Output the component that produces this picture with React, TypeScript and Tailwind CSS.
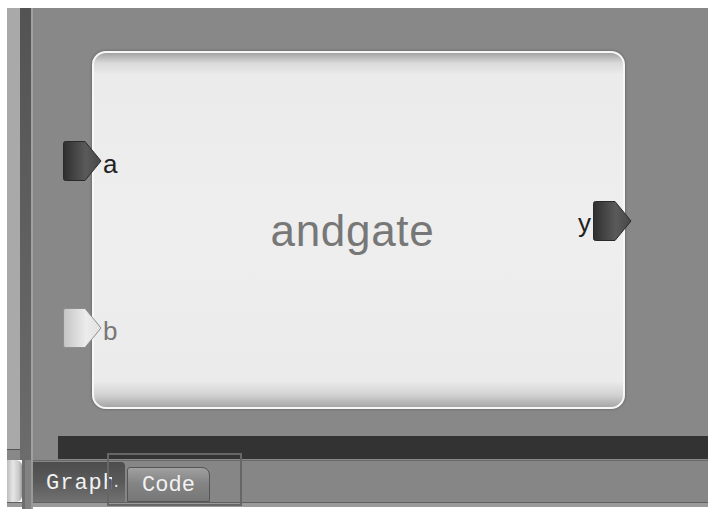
function PortShape({ dark }: { dark: boolean }) {
  const id = dark ? "portDark" : "portLight";
  return (
    <svg width="39" height="40" viewBox="0 0 39 40">
      <defs>
        <linearGradient id={id} x1="0" y1="0" x2="1" y2="0">
          {dark ? (
            <>
              <stop offset="0" stopColor="#2f2f2f" />
              <stop offset="0.6" stopColor="#5a5a5a" />
              <stop offset="1" stopColor="#474747" />
            </>
          ) : (
            <>
              <stop offset="0" stopColor="#c4c4c4" />
              <stop offset="0.6" stopColor="#ececec" />
              <stop offset="1" stopColor="#e2e2e2" />
            </>
          )}
        </linearGradient>
      </defs>
      <path
        d="M2.5 0.5 H22 L38 20 L22 39.5 H2.5 Q0.5 39.5 0.5 37.5 V2.5 Q0.5 0.5 2.5 0.5 Z"
        fill={`url(#${id})`}
        stroke={dark ? "#2a2a2a" : "#8e8e8e"}
        strokeWidth="1"
      />
    </svg>
  );
}

function AndGate() {
  return (
    <div className="relative w-[533px] h-[358px] rounded-[14px] border-2 border-[#f7f7f7] shadow-[0_0_3px_rgba(0,0,0,0.35)] bg-[linear-gradient(to_bottom,#a3a3a3_0px,#d9d9d9_10px,#ebebeb_22px,#eeeeee_50%,#ebebeb_calc(100%-26px),#d2d2d2_calc(100%-12px),#a6a6a6_100%)]">
      <div className="absolute inset-0 flex items-center justify-center pr-[12px] pt-[2px]">
        <span className="text-[44px] tracking-[0.7px] text-[#777]">andgate</span>
      </div>

      {/* input a */}
      <div className="absolute left-[-31px] top-[88px]">
        <PortShape dark />
      </div>
      <span className="absolute left-[9px] top-[98px] text-[26px] leading-none text-[#222]">a</span>

      {/* input b */}
      <div className="absolute left-[-31px] top-[255px]">
        <PortShape dark={false} />
      </div>
      <span className="absolute left-[9px] top-[265px] text-[26px] leading-none text-[#777]">b</span>

      {/* output y */}
      <div className="absolute left-[499px] top-[148px]">
        <PortShape dark />
      </div>
      <span className="absolute left-[484px] top-[157px] text-[26px] leading-none text-[#222]">y</span>
    </div>
  );
}

export default function App() {
  return (
    <div className="relative w-[712px] h-[516px] overflow-hidden bg-white pt-[8px] pl-[7px] pr-[4px] flex flex-col font-['Liberation_Sans',Arial,sans-serif]">
      {/* editor area */}
      <div className="flex h-[452px]">
        <div className="w-[13px] flex flex-col">
          <div className="flex-1 bg-[#a9a9a9]" />
          <div className="h-px bg-[#555]" />
          <div className="h-[10px] bg-[#888]" />
        </div>
        <div className="w-[11px] bg-[linear-gradient(to_bottom,#535353,#6c6c6c)]" />
        <div className="w-[2px] bg-[#a0a0a0]" />

        <div className="flex-1 flex flex-col bg-[#888]">
          <div className="flex-1 pl-[59px] pt-[43px]">
            <AndGate />
          </div>
          <div className="ml-[25px] h-[23px] mb-px bg-[#333]" />
        </div>
      </div>

      {/* tab bar */}
      <div className="flex h-[49px]">
        <div className="w-[15px] flex flex-col">
          <div className="h-[42px] rounded-r-[6px] bg-[linear-gradient(to_right,#bdbdbd,#e6e6e6_40%,#c8c8c8_80%,#9a9a9a)]" />
          <div className="h-px bg-[#606060]" />
          <div className="h-[4px] bg-[#9a9a9a]" />
        </div>
        <div className="w-[3px] bg-[#6d6d6d]" />
        <div className="w-[6px] bg-[#828282]" />
        <div className="w-[2px] bg-[#999]" />

        <div className="flex-1 flex flex-col">
          <div className="h-px bg-[#6a6a6a]" />
          <div className="h-[41px] bg-[#868686] flex items-end gap-[2px] font-['Liberation_Mono','Courier_New',monospace] text-[22px] text-[#f2f2f2]">
            <div className="w-[92px] h-[40px] rounded-tr-[4px] bg-[linear-gradient(to_bottom,#4d4d4d,#5a5a5a_50%,#727272)] flex items-center pl-[13px] pt-[3px]">
              <div className="w-[66px] overflow-hidden whitespace-nowrap tracking-[1px]">Graph</div>
              <span className="text-[14px] self-end pb-[8px]">.</span>
            </div>
            <div className="w-[83px] h-[35px] rounded-tl-[3px] rounded-tr-[8px] border border-[#555] bg-[linear-gradient(to_bottom,#a0a0a0,#858585_45%,#777)] flex items-center justify-center pt-[2px]">
              Code
            </div>
          </div>
          <div className="h-px bg-[#606060]" />
          <div className="h-[4px] bg-[#9a9a9a]" />
        </div>
      </div>

      {/* focus outline around tabs */}
      <div className="absolute left-[107px] top-[453px] w-[135px] h-[53px] border-2 border-[#666]" />
    </div>
  );
}
